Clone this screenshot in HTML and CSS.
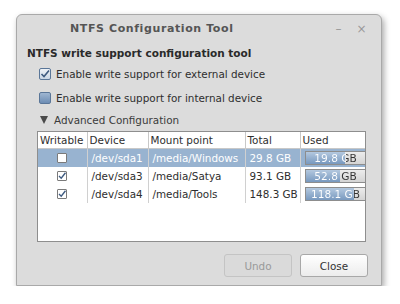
FILE: index.html
```html
<!DOCTYPE html>
<html lang="en">
<head>
    <meta charset="UTF-8" />
    <title>NTFS Configuration Tool</title>
    <link rel="stylesheet" href="styles.css">
</head>
<body>
    <div class="window">
        <div class="titlebar">
            <span class="title">NTFS Configuration Tool</span>
            <span class="wbtn">&#8211;</span>
            <span class="wbtn">&#215;</span>
        </div>
        <div class="content">
            <h1>NTFS write support configuration tool</h1>
            <label class="check-row"><span class="box checked"><svg width="10" height="10" viewBox="0 0 10 10"><path d="M1.5 5 L4 7.5 L9 1.5" fill="none" stroke="#3d5a80" stroke-width="1.6"/></svg></span>Enable write support for external device</label>
            <label class="check-row"><span class="box"></span>Enable write support for internal device</label>
            <div class="expander"><span class="tri"></span>Advanced Configuration</div>

            <div class="table-frame">
                <table>
                    <colgroup><col class="c-w"><col class="c-d"><col class="c-m"><col class="c-t"><col></colgroup>
                    <thead>
                        <tr><th>Writable</th><th>Device</th><th>Mount point</th><th>Total</th><th>Used</th></tr>
                    </thead>
                    <tbody>
                        <tr class="selected">
                            <td><span class="small-box"></span></td>
                            <td>/dev/sda1</td><td>/media/Windows</td><td>29.8 GB</td>
                            <td><div class="bar" style="--p:66%"><div class="fill"></div><span>19.8 GB</span></div></td>
                        </tr>
                        <tr>
                            <td><span class="small-box"><svg width="8" height="8" viewBox="0 0 8 8"><path d="M1 4 L3.2 6.2 L7.5 0.8" fill="none" stroke="#3d5a80" stroke-width="1.4"/></svg></span></td>
                            <td>/dev/sda3</td><td>/media/Satya</td><td>93.1 GB</td>
                            <td><div class="bar" style="--p:57%"><div class="fill"></div><span>52.8 GB</span></div></td>
                        </tr>
                        <tr>
                            <td><span class="small-box"><svg width="8" height="8" viewBox="0 0 8 8"><path d="M1 4 L3.2 6.2 L7.5 0.8" fill="none" stroke="#3d5a80" stroke-width="1.4"/></svg></span></td>
                            <td>/dev/sda4</td><td>/media/Tools</td><td>148.3 GB</td>
                            <td><div class="bar" style="--p:80%"><div class="fill"></div><span>118.1 GB</span></div></td>
                        </tr>
                    </tbody>
                </table>
            </div>

            <div class="buttons">
                <button class="btn" disabled>Undo</button>
                <button class="btn">Close</button>
            </div>
        </div>
    </div>
</body>
</html>
```

FILE: styles.css
```css
body { margin: 0; background: #ffffff; font-family: "DejaVu Sans", sans-serif; font-size: 10.4px; color: #2e2e2e; }
.window {
    margin: 14px 0 0 16px;
    width: 364px;
    height: 270px;
    background: #dcdcdc;
    border: 1px solid #a9a9a9;
    border-radius: 6px 6px 0 0;
    box-shadow: 2px 3px 6px rgba(0,0,0,0.35);
}
.titlebar { display: flex; align-items: center; height: 27px; padding: 0 8px 0 0; color: #555; }
.title { flex: 1; padding-left: 53px; font-weight: bold; font-size: 11px; letter-spacing: 0.6px; }
.wbtn { width: 23px; text-align: center; color: #999; font-size: 12px; }
.content { padding: 0 12px 0 10px; }
h1 { margin: 5px 0 2px; height: 13px; line-height: 13px; font-size: 10.5px; font-weight: bold; color: #2a2a2a; }
.check-row { display: flex; align-items: center; height: 24px; padding-left: 12px; }
.box {
    width: 10px; height: 10px; margin-right: 5px;
    border: 1px solid #5a7698; border-radius: 2px;
    background: linear-gradient(#9fb6d1, #6d8db4);
    display: flex; align-items: center; justify-content: center;
}
.box.checked { background: linear-gradient(#eef2f7, #c9d6e5); }
.expander { display: flex; align-items: center; height: 20px; padding-left: 13px; color: #3a3a3a; }
.tri { width: 0; height: 0; border-left: 4px solid transparent; border-right: 4px solid transparent; border-top: 8px solid #4a4a4a; margin-right: 6px; }
.table-frame { margin: 1px 3px 0 10px; height: 109px; background: #fff; border: 1px solid #8e8e8e; }
table { border-collapse: collapse; width: 100%; table-layout: fixed; }
.c-w { width: 49px; } .c-d { width: 61px; } .c-m { width: 97px; } .c-t { width: 55px; }
th { font-weight: normal; text-align: left; height: 16px; padding: 0 2px; border-right: 1px solid #c8c8c8; border-bottom: 1px solid #c8c8c8; white-space: nowrap; overflow: hidden; }
th:last-child { border-right: none; }
td { height: 18px; padding: 0 4px; line-height: 14px; border-right: 1px solid #d0d0d0; white-space: nowrap; overflow: hidden; }
td:last-child { border-right: none; }
.selected td { background: #98b3d0; color: #fff; }
.small-box { display: flex; align-items: center; justify-content: center; margin: 0 auto; width: 8px; height: 8px; background: #fff; border: 1px solid #7a7a7a; border-radius: 1px; }
.bar { position: relative; width: 60px; height: 12px; background: linear-gradient(#ececec, #d4d4d4); border: 1px solid #8d8d8d; }
.fill { position: absolute; left: 0; top: 0; width: var(--p); height: 100%; background: linear-gradient(#b3c8df, #7899bf); }
.bar span {
    position: absolute; left: 0; top: 0; width: 100%;
    text-align: center; line-height: 12px; font-size: 10.6px;
    background: linear-gradient(90deg, #ffffff var(--p), #333333 var(--p));
    -webkit-background-clip: text; background-clip: text; color: transparent;
}
.buttons { display: flex; justify-content: flex-end; gap: 8px; margin: 12px 1px 0 0; }
.btn {
    width: 68px; height: 23px;
    font-family: "DejaVu Sans", sans-serif; font-size: 10.4px; color: #333;
    background: linear-gradient(#ffffff, #ececec);
    border: 1px solid #a8a8a8; border-radius: 3px;
}
.btn:disabled { color: #999; background: #dadada; border-color: #c4c4c4; }
```
